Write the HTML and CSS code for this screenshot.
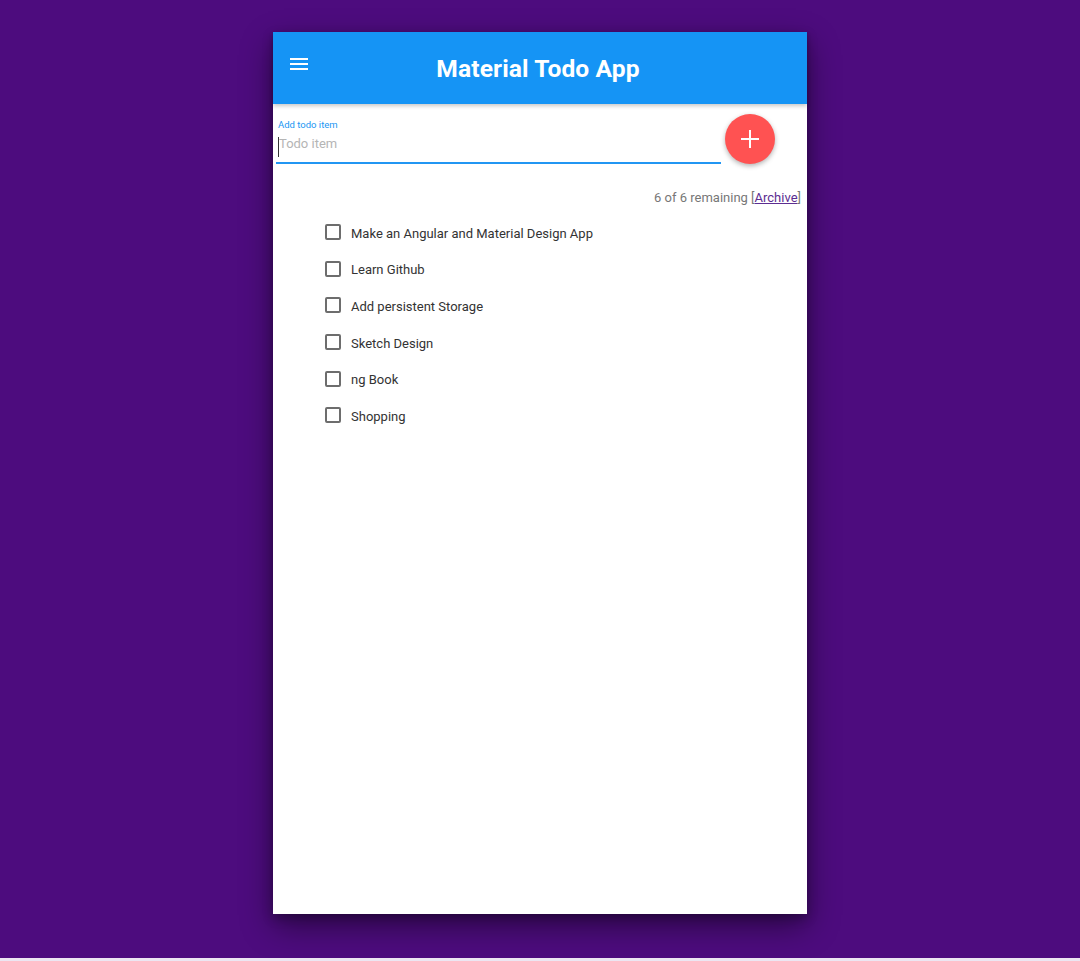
FILE: index.html
```html
<!DOCTYPE html>
<html>
<head>
<meta charset="utf-8">
<link rel="stylesheet" href="styles.css">
</head>
<body>
<div class="stage">
  <div class="card">
    <header class="toolbar">
      <svg class="menu" width="18" height="12" viewBox="0 0 18 12"><rect x="0" y="0" width="18" height="2" fill="#fff"/><rect x="0" y="5" width="18" height="2" fill="#fff"/><rect x="0" y="10" width="18" height="2" fill="#fff"/></svg>
      <h1 class="title">Material Todo App</h1>
    </header>
    <div class="form-row">
      <div class="field">
        <div class="field-label">Add todo item</div>
        <div class="field-input"><span class="caret"></span><span class="placeholder">Todo item</span></div>
      </div>
      <div class="fab">
        <svg width="18" height="18" viewBox="0 0 18 18"><rect x="8" y="0" width="2" height="18" fill="#fff"/><rect x="0" y="8" width="18" height="2" fill="#fff"/></svg>
      </div>
    </div>
    <div class="remaining">6 of 6 remaining [<a class="archive" href="#">Archive</a>]</div>
    <ul class="todos">
      <li class="todo"><span class="box"></span><span class="todo-text">Make an Angular and Material Design App</span></li>
      <li class="todo"><span class="box"></span><span class="todo-text">Learn Github</span></li>
      <li class="todo"><span class="box"></span><span class="todo-text">Add persistent Storage</span></li>
      <li class="todo"><span class="box"></span><span class="todo-text">Sketch Design</span></li>
      <li class="todo"><span class="box"></span><span class="todo-text">ng Book</span></li>
      <li class="todo"><span class="box"></span><span class="todo-text">Shopping</span></li>
    </ul>
  </div>
</div>
</body>
</html>
```
FILE: styles.css
```css
html {
  background: #ece6f2;
}
body {
  margin: 0;
  font-family: Roboto, "Liberation Sans", sans-serif;
}
.stage {
  height: 958px;
  background: #4d0c7e;
  padding-top: 32px;
  box-sizing: border-box;
}
.card {
  width: 534px;
  height: 882px;
  margin: 0 auto;
  background: #fff;
  box-shadow: 0 12px 30px rgba(0, 0, 0, 0.45), 0 4px 10px rgba(0, 0, 0, 0.25);
}
.toolbar {
  position: relative;
  height: 72px;
  background: #1594f5;
  display: flex;
  align-items: center;
  justify-content: center;
  box-shadow: 0 2px 4px rgba(0, 0, 0, 0.22);
}
.menu {
  position: absolute;
  left: 17px;
  top: 26px;
}
.title {
  margin: 0;
  color: #fff;
  font-size: 24.6px;
  font-weight: 700;
  letter-spacing: 0.1px;
  padding-top: 1px;
  padding-right: 4px;
}
.form-row {
  display: flex;
  align-items: flex-start;
  padding: 10px 32px 0 3px;
}
.field {
  flex: 1;
  margin-top: 5px;
}
.field-label {
  font-size: 9.5px;
  line-height: 12px;
  color: #2196f3;
  padding-left: 2px;
}
.field-input {
  display: flex;
  align-items: center;
  padding: 3px 0 8px 2px;
  height: 20px;
  border-bottom: 2px solid #2196f3;
}
.caret {
  display: inline-block;
  width: 1px;
  height: 20px;
  background: #333;
  margin-top: 6px;
}
.placeholder {
  font-size: 13px;
  color: #b5b5b5;
  line-height: 20px;
}
.fab {
  width: 50px;
  height: 50px;
  border-radius: 50%;
  background: #ff5252;
  margin-left: 4px;
  display: flex;
  align-items: center;
  justify-content: center;
  box-shadow: 0 2px 5px rgba(0, 0, 0, 0.3);
}
.remaining {
  margin-top: 25px;
  text-align: right;
  padding-right: 6px;
  font-size: 13px;
  line-height: 18px;
  color: #777;
}
.archive {
  color: #5c2d91;
  text-decoration: underline;
}
.todos {
  list-style: none;
  margin: 8px 0 0;
  padding: 0 0 0 52px;
}
.todo {
  display: flex;
  align-items: center;
  height: 36.6px;
}
.box {
  width: 16px;
  height: 16px;
  border: 2px solid #6d6d6d;
  border-radius: 2px;
  box-sizing: border-box;
  margin-right: 10px;
  margin-top: -2px;
}
.todo-text {
  font-size: 13px;
  color: #333;
}
```
